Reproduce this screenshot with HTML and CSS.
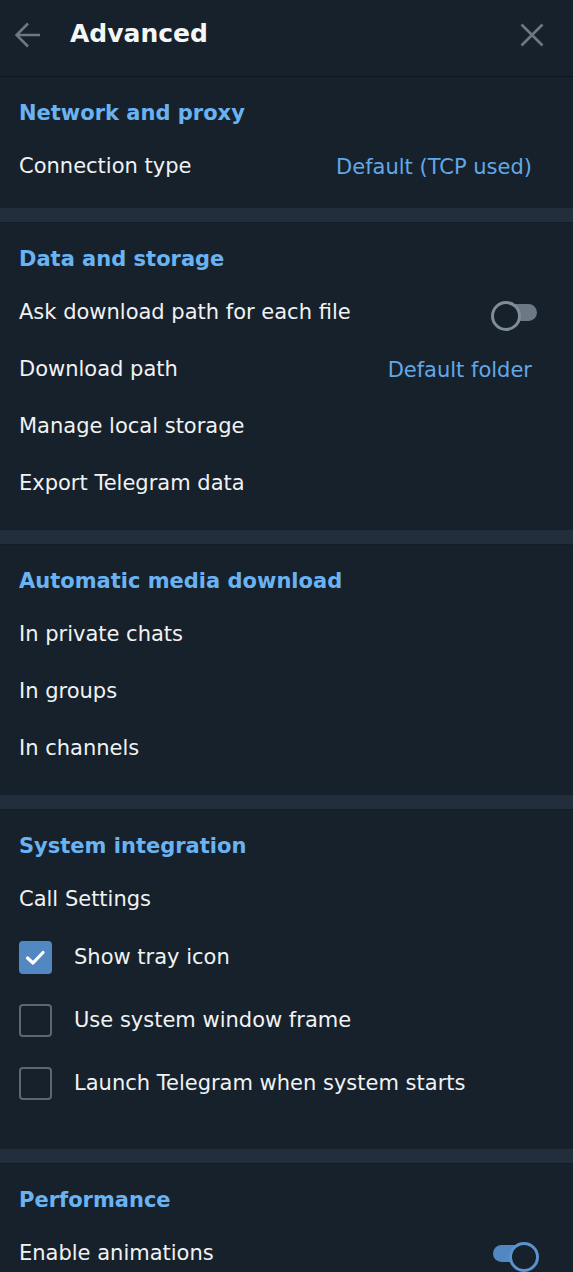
FILE: index.html
```html
<!DOCTYPE html>
<html lang="en">
<head>
<meta charset="utf-8">
<title>Advanced</title>
<link rel="stylesheet" href="styles.css">
</head>
<body>
<div class="panel">
  <header class="topbar">
    <button class="icon-btn back" aria-label="Back">
      <svg width="26" height="26" viewBox="0 0 26 26"><path d="M25 13H2.5M13 1.5L1.5 13L13 24.5" fill="none" stroke="#6d7883" stroke-width="2.6" stroke-linecap="butt" stroke-linejoin="miter"/></svg>
    </button>
    <h1 class="title">Advanced</h1>
    <button class="icon-btn close" aria-label="Close">
      <svg width="24" height="24" viewBox="0 0 24 24"><path d="M1.5 1.5L22.5 22.5M22.5 1.5L1.5 22.5" fill="none" stroke="#6d7883" stroke-width="2.6"/></svg>
    </button>
  </header>

  <section class="section sec-tight">
    <h2 class="heading">Network and proxy</h2>
    <div class="row"><span class="label">Connection type</span><span class="value">Default (TCP used)</span></div>
  </section>
  <div class="divider"></div>

  <section class="section">
    <h2 class="heading">Data and storage</h2>
    <div class="row"><span class="label">Ask download path for each file</span><span class="toggle"></span></div>
    <div class="row"><span class="label">Download path</span><span class="value">Default folder</span></div>
    <div class="row"><span class="label">Manage local storage</span></div>
    <div class="row"><span class="label">Export Telegram data</span></div>
  </section>
  <div class="divider"></div>

  <section class="section">
    <h2 class="heading">Automatic media download</h2>
    <div class="row"><span class="label">In private chats</span></div>
    <div class="row"><span class="label">In groups</span></div>
    <div class="row"><span class="label">In channels</span></div>
  </section>
  <div class="divider"></div>

  <section class="section sec-loose">
    <h2 class="heading">System integration</h2>
    <div class="row"><span class="label">Call Settings</span></div>
    <div class="checks">
      <div class="check-row"><span class="checkbox checked"><svg width="33" height="33" viewBox="0 0 33 33"><path d="M8.5 17L14 22L24 11.5" fill="none" stroke="#fff" stroke-width="3.2" stroke-linecap="round" stroke-linejoin="round"/></svg></span><span class="label">Show tray icon</span></div>
      <div class="check-row"><span class="checkbox"></span><span class="label">Use system window frame</span></div>
      <div class="check-row"><span class="checkbox"></span><span class="label">Launch Telegram when system starts</span></div>
    </div>
  </section>
  <div class="divider"></div>

  <section class="section">
    <h2 class="heading">Performance</h2>
    <div class="row"><span class="label">Enable animations</span><span class="toggle on"></span></div>
  </section>
</div>
</body>
</html>
```

FILE: styles.css
```css
* { box-sizing: border-box; }
html, body {
  margin: 0;
  padding: 0;
  background: #17212b;
}
body {
  font-family: "DejaVu Sans", "Liberation Sans", sans-serif;
  color: #f0f2f4;
  overflow: hidden;
}
.panel {
  width: 573px;
  display: flex;
  flex-direction: column;
}
.topbar {
  height: 77px;
  display: flex;
  align-items: center;
  border-bottom: 1px solid #0f161e;
  padding: 0 29px 8px 15px;
}
.icon-btn {
  background: none;
  border: 0;
  padding: 0;
  margin: 0;
  display: flex;
  cursor: pointer;
}
.back { margin-top: 2px; }
.close { margin-left: auto; margin-top: 2px; }
.title {
  margin: 0 0 2px 29px;
  font-size: 25px;
  font-weight: bold;
  color: #f5f6f7;
  line-height: 1;
}
.section {
  display: flex;
  flex-direction: column;
  padding-bottom: 18px;
}
.sec-tight { padding-bottom: 13px; }
.sec-loose { padding-bottom: 34px; }
.heading {
  margin: 0;
  padding: 25px 19px 12px;
  height: 61px;
  font-size: 21px;
  line-height: 23px;
  font-weight: bold;
  color: #6ab3f3;
}
.row {
  height: 57px;
  display: flex;
  align-items: center;
  padding: 0 41px 0 19px;
  font-size: 21px;
}
.label { line-height: 23px; }
.value {
  margin-left: auto;
  color: #62a8e6;
}
.checks {
  display: flex;
  flex-direction: column;
  margin-top: -2px;
}
.check-row {
  height: 63px;
  display: flex;
  align-items: center;
  padding: 0 19px;
  font-size: 21px;
  gap: 22px;
}
.checkbox {
  width: 33px;
  height: 33px;
  flex: none;
  border-radius: 4px;
  border: 2.8px solid #5b6773;
  display: flex;
}
.checkbox.checked {
  border: 0;
  background: #5288c1;
}
.divider {
  height: 15px;
  background: #232e3c;
  border-bottom: 1px solid #141c25;
}
.toggle {
  margin-left: auto;
  margin-right: -5px;
  position: relative;
  width: 46px;
  height: 24px;
  flex: none;
}
.toggle::before {
  content: "";
  position: absolute;
  left: 4px;
  right: 0;
  top: 3.5px;
  height: 17px;
  border-radius: 8.5px;
  background: #6c7884;
}
.toggle::after {
  content: "";
  position: absolute;
  left: 0;
  top: 0;
  width: 24px;
  height: 24px;
  border-radius: 50%;
  background: #17212b;
  border: 3px solid #808c98;
}
.toggle.on { margin-right: -7px; }
.toggle.on::before {
  left: 0;
  right: 4px;
  background: #5288c1;
}
.toggle.on::after {
  left: auto;
  right: 0;
  border-color: #5a93cf;
}
```
